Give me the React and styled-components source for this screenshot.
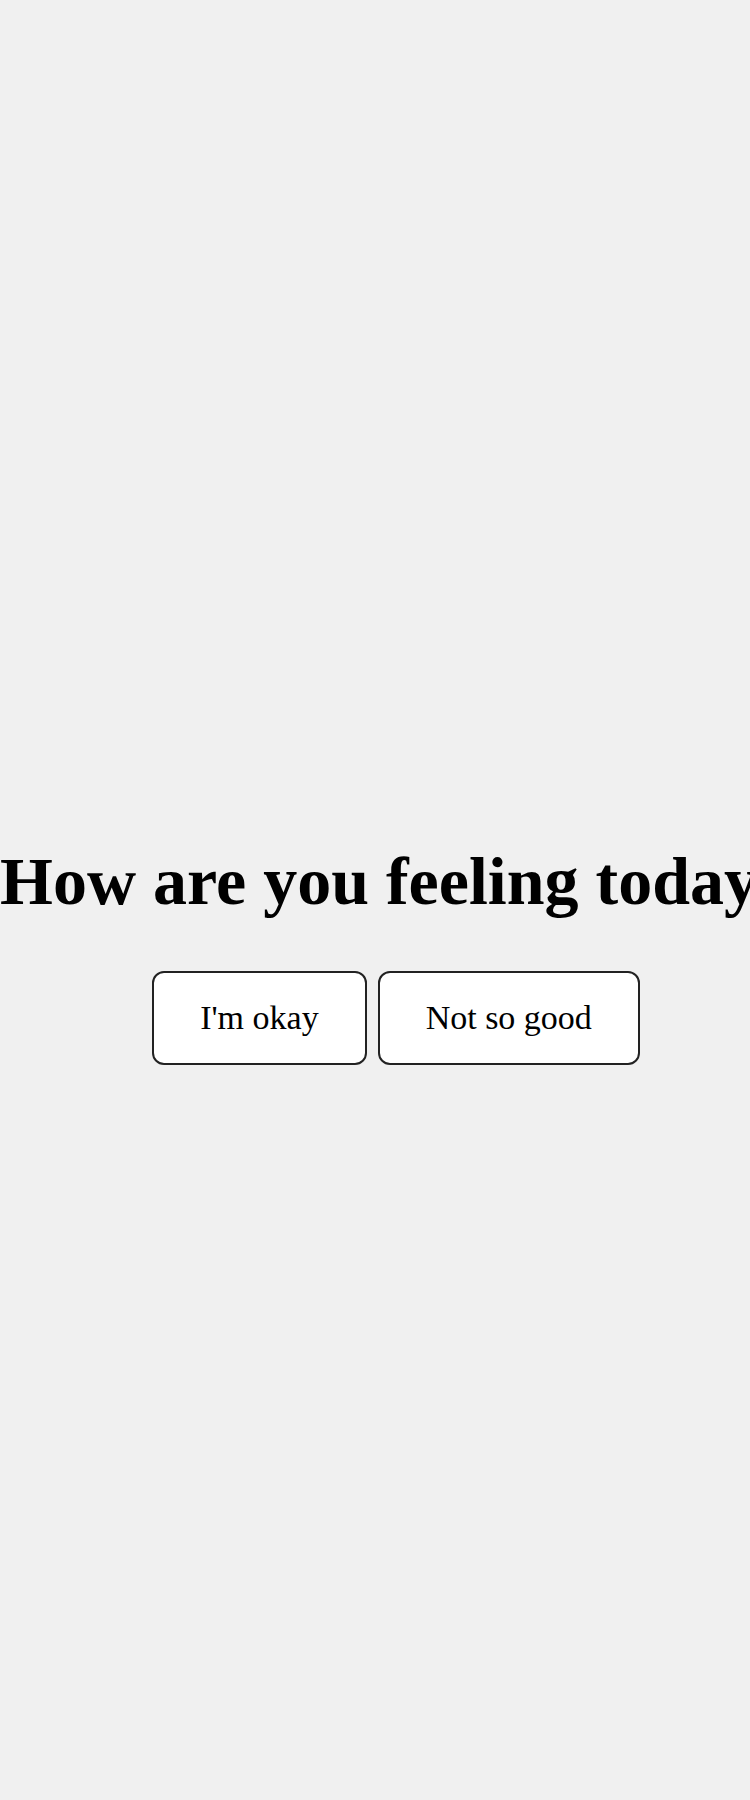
import React from "react";
import styled, { createGlobalStyle } from "styled-components";

const GlobalStyle = createGlobalStyle`
  html, body {
    margin: 0;
    padding: 0;
    background: #f0f0f0;
  }
`;

const Page = styled.div`
  min-height: 100vh;
  box-sizing: border-box;
  padding-top: 842px;
`;

const Prompt = styled.div`
  display: flex;
  flex-direction: column;
  align-items: center;
  width: max-content;
  font-family: "Liberation Serif", serif;
  color: #000;
`;

const Question = styled.h1`
  margin: 0 0 50px;
  font-size: 68px;
  font-weight: bold;
  line-height: normal;
  white-space: nowrap;
`;

const Choices = styled.div`
  display: flex;
  gap: 11px;
`;

const Choice = styled.button`
  font-family: "Liberation Serif", serif;
  font-size: 34px;
  line-height: normal;
  color: #000;
  background: #fff;
  border: 2px solid #222;
  border-radius: 12px;
  padding: 26px 46px;
  cursor: pointer;
`;

export default function App() {
  return (
    <>
      <GlobalStyle />
      <Page>
        <Prompt>
          <Question>How are you feeling today?</Question>
          <Choices>
            <Choice>I'm okay</Choice>
            <Choice>Not so good</Choice>
          </Choices>
        </Prompt>
      </Page>
    </>
  );
}
